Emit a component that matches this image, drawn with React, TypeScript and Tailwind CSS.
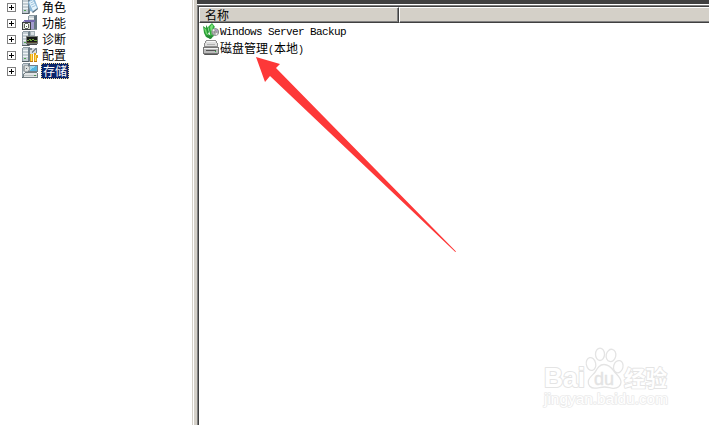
import type { ReactNode } from "react";

const cabinet = (
  <>
    <path d="M0 1l2-1h6v15H0z" fill="#8d9aa3" />
    <path d="M1 1h5v13H1z" fill="#c3cdd3" />
    <path d="M1 3h5M1 6h5M1 9h5" stroke="#eef2f4" />
    <path d="M6 1l2-1v14l-2 1z" fill="#6f7f8a" />
    <path d="M0 14h7v1H0z" fill="#545f66" />
    <path d="M2 11h2v1H2z" fill="#4fa34f" />
  </>
);

function TreeIcon({ children }: { children: ReactNode }) {
  return (
    <svg viewBox="0 0 16 16" className="ml-[6px] size-4 shrink-0 self-end" shapeRendering="crispEdges">
      {children}
    </svg>
  );
}

const tree = [
  {
    label: "角色",
    icon: (
      <>
        {cabinet}
        <g shapeRendering="auto">
          <path d="M6 3l4-3 3 1 3 8-5 4-3-1z" fill="#8fb9d8" />
          <path d="M7 3l4-2 4 8-4 3z" fill="#e6f4fc" />
          <path d="M8.500 4l3-1.500M9 6l3.500-1.500M10 8l3.500-1.500" stroke="#8db6d4" strokeWidth=".8" />
          <path d="M10 13l6-4v1l-5 4z" fill="#546a79" />
        </g>
      </>
    ),
  },
  {
    label: "功能",
    icon: (
      <>
        <path d="M6 1l2-1h7v15H6z" fill="#89979f" />
        <path d="M7 1h5v13H7z" fill="#cbd4d8" />
        <path d="M7 3h5M7 6h5M7 9h5" stroke="#f4f5f6" />
        <path d="M12 1l3-1v14h-3z" fill="#667782" />
        <path d="M2 5h11v2H2z" fill="#7469ad" />
        <path d="M1 6h2v2H1zM9 7h3v7H9z" fill="#a39cce" />
        <path d="M0 7h9v8H0z" fill="#3c4042" />
        <path d="M1 8h7v6H1z" fill="#d9ddcf" />
        <path d="M3 8h3v1h1v4H6v1H3v-1H2V9h1z" fill="#62665e" />
        <path d="M3 9h3v4H3z" fill="#fff" />
        <path d="M4 11h1v1H4z" fill="#477a38" />
      </>
    ),
  },
  {
    label: "诊断",
    icon: (
      <>
        {cabinet}
        <path d="M8 0h5v5H8z" fill="#a3afb5" />
        <path d="M9 1h3v3H9z" fill="#d8dfe2" />
        <path d="M4 5h12v8H4z" fill="#777b78" />
        <path d="M5 6h10v6H5z" fill="#181b18" />
        <path d="M5 9h2l1-1 1 2 2-2 1 1h3" fill="none" stroke="#6da13c" />
        <path d="M5 11h10" stroke="#594b30" />
        <path d="M5 13h10v1H5z" fill="#484b4c" />
      </>
    ),
  },
  {
    label: "配置",
    icon: (
      <>
        {cabinet}
        <path d="M8 1h7v6H8z" fill="#d7dcdf" />
        <path d="M8 1h2v2H8zM14 1h1v5h-1zM9 5l4-4 1 1-4 4z" fill="#7e8990" />
        <path d="M8 7h3v8H8zM12 6h2v2h2v3h-1v4h-3z" fill="#e7a517" />
        <path d="M9 7h1v7H9zM13 8h1v6h-1z" fill="#ffe165" />
        <path d="M8 14h3v1H8zM12 14h3v1h-3z" fill="#b77812" />
      </>
    ),
  },
  {
    label: "存储",
    selected: true,
    icon: (
      <>
        {cabinet}
        <path d="M7 2h9v7H7z" fill="#71808a" />
        <path d="M8 3h7v5H8z" fill="#55b6df" />
        <path d="M8 3h6l-6 4z" fill="#9cdbf2" />
        <path d="M2 2h4v1h2v5H6v1H2V8H1V3h1z" fill="#a2a8ab" />
        <path d="M3 3h3v1h1v3H6v1H3z" fill="#dce0df" />
        <path d="M4 5h1v1H4z" fill="#566169" />
        <path d="M3 9h11l2 2v4H1v-4z" fill="#737e83" />
        <path d="M3 10h11l1 1v3H2v-3z" fill="#e2e5e6" />
        <path d="M2 12h13v1H2z" fill="#bcc3c5" />
        <path d="M12 12h2v1h-2z" fill="#4b9251" />
      </>
    ),
  },
];

function Expander() {
  return (
    <svg viewBox="0 0 9 9" className="mb-[3px] ml-[7px] size-[9px] shrink-0 self-end" shapeRendering="crispEdges">
      <path d="M.5.5h8v8h-8z" fill="#fff" stroke="#808080" />
      <path d="M2 4h5v1H2zM4 2h1v5H4z" fill="#000" />
    </svg>
  );
}

function BackupIcon() {
  return (
    <svg viewBox="0 0 16 16" className="size-4 shrink-0">
      <path d="M0 3l3 2V2l2 3 1 4-1 2 4 2-1 3-5-2-2-4z" fill="#289d36" />
      <path d="M1 5l2 1 1 4 2 3-3-2z" fill="#74da70" />
      <path d="M5 4l4-4 3 4-1 1-1 5 1 3-3 2-1-4z" fill="#2eae3b" />
      <path d="M7 4l2-3 1 2-1 5 1 4-1 1-1-4z" fill="#7be278" />
      <circle cx="12.200" cy="9" r="3.500" fill="#aeb2b2" stroke="#68706f" strokeWidth=".7" />
      <path d="M12 9L9 7l2-1zM12 9l3 2-2 1z" fill="#f6f6f0" />
      <path d="M12 9l1-3 2 2z" fill="#b49acb" />
      <circle cx="12.200" cy="9" r="1" fill="#eee" stroke="#555" strokeWidth=".6" />
      <path d="M4 12l3 1 3-1-1 3-2 1-3-2z" fill="#278936" />
    </svg>
  );
}

function DiskIcon() {
  return (
    <svg viewBox="0 0 16 16" className="size-4 shrink-0" shapeRendering="crispEdges">
      <path d="M3 0h10v1h1v2h1v4H1V3h1V1h1z" fill="#8d8d8d" />
      <path d="M3 1h10v2h1v3H2V3h1z" fill="#dedede" />
      <path d="M4 1h8v1H4z" fill="#f8f8f8" />
      <path d="M4 4h8v1H4z" fill="#b0b0b0" />
      <path d="M0 7h16v7h-1v1H1v-1H0z" fill="#777" />
      <path d="M1 8h14v5H1z" fill="#bbb" />
      <path d="M1 8h14v1H1z" fill="#f3f3f3" />
      <path d="M3 10h10v1H3z" fill="#555" />
      <path d="M12 11h1v1h-1z" fill="#36b44b" />
      <path d="M2 14h12v1H2z" fill="#555" />
    </svg>
  );
}

function Watermark() {
  return (
    <svg
      viewBox="0 0 150 75"
      className="pointer-events-none absolute left-[530px] top-[340px] h-[75px] w-[150px]"
      fill="#fff"
      stroke="#e4e4e4"
      strokeWidth="1.3"
      strokeLinejoin="round"
    >
      <text
        x="14"
        y="47"
        fontFamily="'Liberation Sans', Arial, sans-serif"
        fontSize="28"
        fontWeight="700"
        paintOrder="stroke"
        strokeWidth="2"
        textLength="41"
        lengthAdjust="spacingAndGlyphs"
      >
        Bai
      </text>
      <ellipse cx="61" cy="24" rx="4.7" ry="6.5" transform="rotate(-12 61 24)" />
      <ellipse cx="70" cy="14.300" rx="4.5" ry="6.2" />
      <ellipse cx="81" cy="15.400" rx="4.8" ry="6.2" transform="rotate(12 81 15.400)" />
      <ellipse cx="88.300" cy="26.700" rx="4.7" ry="6.2" transform="rotate(15 88.300 26.700)" />
      <path d="M74 24.500c4.500 0 7.500 3.200 9.800 6.500 2.800 3.500 7.200 6.500 7.200 11 0 4.200-3.300 6.500-8 6.300-3-.2-5-1.300-8.500-1.300s-6 1.100-9.500 1.200c-4.500.1-7.200-3-6.700-7 .4-3.600 4.500-6.100 6.900-9.200 2.200-3.800 4.200-7.500 8.800-7.500z" />
      <text
        x="64"
        y="45"
        fontFamily="'Liberation Sans', Arial, sans-serif"
        fontSize="18"
        fill="#e3e3e3"
        strokeWidth=".4"
        textLength="20"
        lengthAdjust="spacingAndGlyphs"
      >
        du
      </text>
      <g paintOrder="stroke">
        <text
          x="94"
          y="45.500"
          fontFamily="'Noto Sans CJK SC', sans-serif"
          fontSize="21.500"
          fontWeight="700"
          strokeWidth="1.800"
        >
          经验
        </text>
        <text
          x="14"
          y="64"
          fontFamily="'Liberation Sans', Arial, sans-serif"
          fontSize="14"
          stroke="#ebebeb"
          strokeWidth="1.600"
          textLength="124"
          lengthAdjust="spacingAndGlyphs"
        >
          jingyan.baidu.com
        </text>
      </g>
    </svg>
  );
}

export default function App() {
  return (
    <div className="relative flex h-[425px] w-[709px] overflow-hidden bg-white font-['Noto_Sans_CJK_SC',sans-serif] text-[12px] leading-4 text-black">
      <aside className="w-[192px] shrink-0">
        {tree.map((item) => (
          <div key={item.label} className="flex h-4 items-end first:h-[15px]">
            <Expander />
            <TreeIcon>{item.icon}</TreeIcon>
            <span
              className={
                item.selected
                  ? "ml-[3px] h-4 w-7 border border-dotted border-[#f5db95] bg-[#0a246a] pl-px leading-[14px] text-white"
                  : "ml-1 h-[15px] leading-[14px]"
              }
            >
              {item.label}
            </span>
          </div>
        ))}
      </aside>
      <div className="flex w-[7px] shrink-0 bg-[#d4d0c8]">
        <div className="ml-px w-px bg-white" />
        <div className="ml-[3px] w-px bg-[#808080]" />
        <div className="w-px bg-[#404040]" />
      </div>
      <main className="min-w-0 grow">
        <div className="-ml-[2px] h-1 bg-[#404040]" />
        <div className="-ml-[2px] h-px bg-white" />
        <div className="-ml-[2px] h-px bg-[#808080]" />
        <div className="-ml-px h-px bg-[#404040]" />
        <div className="flex h-4">
          <div className="w-[200px] border-b border-l border-r border-t border-b-[#404040] border-l-white border-r-[#404040] border-t-white bg-[#d4d0c8]">
            <div className="h-[14px] border-b border-r border-[#808080] pl-[5px] leading-[13px]">名称</div>
          </div>
          <div className="grow border-b border-l border-t border-b-[#404040] border-l-white border-t-white bg-[#d4d0c8]">
            <div className="h-[14px] border-b border-[#808080]" />
          </div>
        </div>
        <div className="flex h-4 items-center pl-1">
          <BackupIcon />
          <span className="ml-px whitespace-pre pt-[2px] font-['Liberation_Mono',monospace] text-[11px] leading-[14px] tracking-[-0.6px]">
            Windows Server Backup
          </span>
        </div>
        <div className="mt-px flex h-4 items-center pl-1">
          <DiskIcon />
          <span className="ml-px whitespace-nowrap pt-[2px]">
            磁盘管理<span className="font-['Liberation_Mono',monospace] text-[10px]">(</span>本地
            <span className="font-['Liberation_Mono',monospace] text-[10px]">)</span>
          </span>
        </div>
      </main>
      <svg viewBox="0 0 202 197" className="pointer-events-none absolute left-[255px] top-[56px] h-[197px] w-[202px]">
        <path d="M1 1l24 7-4 4 180 183.500-.7.500L15 20l-5 6z" fill="#fd3838" />
      </svg>
      <Watermark />
    </div>
  );
}
